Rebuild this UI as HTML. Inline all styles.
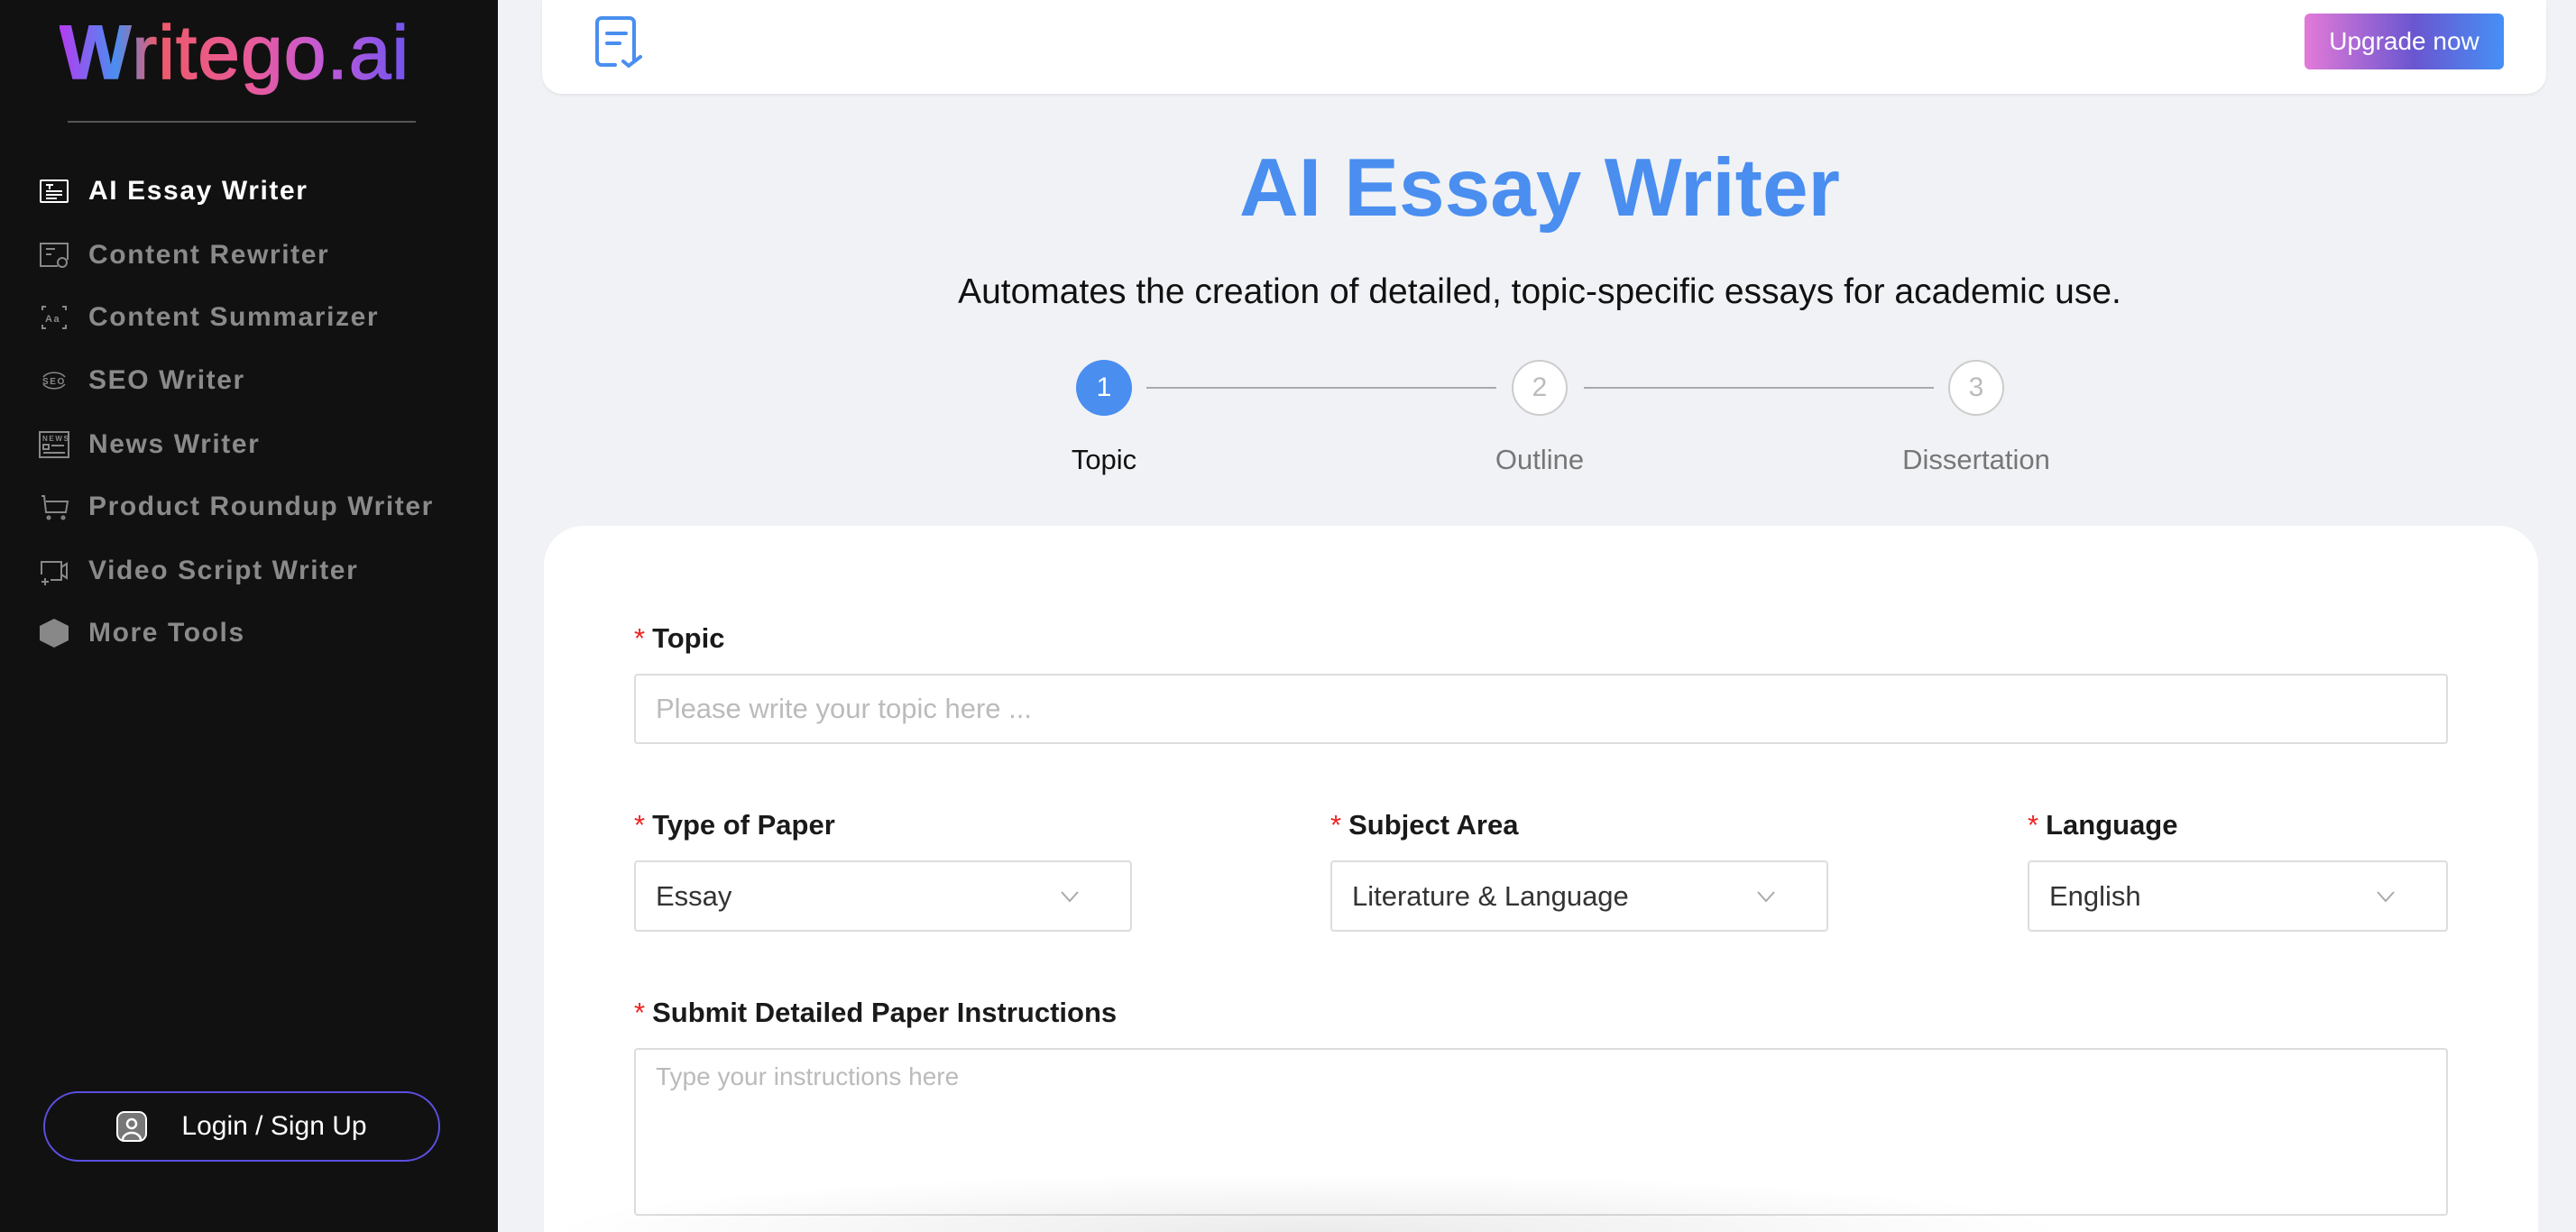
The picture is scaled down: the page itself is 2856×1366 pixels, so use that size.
<!DOCTYPE html>
<html><head><meta charset="utf-8"><style>
*{box-sizing:border-box;margin:0;padding:0}
html,body{width:2856px;height:1366px;overflow:hidden}
body{background:#f0f2f5;font-family:"Liberation Sans",sans-serif;position:relative}
.side{position:absolute;left:0;top:0;width:552px;height:1366px;background:#111}
.logo{position:absolute;left:66px;top:10px;font-size:84px;font-weight:normal;letter-spacing:1px;-webkit-text-stroke:1.5px transparent;background:linear-gradient(90deg,#b53cf0 0%,#4a8ef0 16%,#ee5a6a 28%,#e85a9a 55%,#c45ad6 75%,#7054ee 100%);-webkit-background-clip:text;background-clip:text;color:transparent}
.logo b{font-weight:bold}
.div{position:absolute;left:75px;top:134px;width:386px;height:2px;background:#555}
.item{position:absolute;left:42px;height:40px;display:flex;align-items:center;color:#8a8a8a;font-size:30px;font-weight:bold;letter-spacing:1.6px}
.item svg{width:36px;height:36px;margin-right:20px}
.item.act{color:#fff}
.login{position:absolute;left:48px;top:1210px;width:440px;height:78px;border:2px solid #5b4fe0;border-radius:40px;display:flex;align-items:center;justify-content:center;color:#fff;font-size:30px}
.login svg{margin-right:38px}
.hdr{position:absolute;left:601px;top:0;width:2222px;height:104px;background:#fff;border-radius:0 0 22px 22px;box-shadow:0 2px 3px rgba(0,0,0,.06)}
.up{position:absolute;top:15px;width:221px;height:62px;border-radius:6px;background:linear-gradient(90deg,#e37ad8,#6a56d0 55%,#4590f5);color:#fff;font-size:28px;display:flex;align-items:center;justify-content:center}
.title{position:absolute;left:1000px;width:1414px;top:157px;text-align:center;font-size:91px;font-weight:bold;color:#4a8ef0}
.sub{position:absolute;left:900px;width:1614px;top:302px;text-align:center;font-size:39px;color:#111}
.circ{position:absolute;top:399px;width:62px;height:62px;border-radius:50%;display:flex;align-items:center;justify-content:center;font-size:30px}
.line{position:absolute;top:429px;height:2px;background:#aaa}
.lbl{position:absolute;top:492px;width:300px;text-align:center;font-size:31px;color:#777}
.card{position:absolute;left:603px;top:583px;width:2211px;height:783px;background:#fff;border-radius:44px 44px 0 0}
.fl{position:absolute;font-size:31px;font-weight:bold;color:#1a1a1a}
.fl b{color:#e22;font-weight:normal;margin-right:8px}
.inp{position:absolute;border:2px solid #ddd;border-radius:4px;background:#fff;font-size:31px;color:#bbb;padding-left:22px;display:flex;align-items:center}
.sel{color:#333}
.chev{position:absolute;top:0;bottom:0;display:flex;align-items:center}
</style></head><body>
<div class="side">
<div class="logo"><b>W</b>ritego.ai</div>
<div class="div"></div>
<div class="item act" style="top:192px"><svg viewBox="0 0 36 36" fill="none" stroke="#fff" stroke-width="2"><rect x="3" y="6" width="30" height="24" rx="1"/><path d="M9 11h8M13 11v5M9 18h18M9 22h18M9 26h12"/></svg>AI Essay Writer</div>
<div class="item" style="top:263px"><svg viewBox="0 0 36 36" fill="none" stroke="#888" stroke-width="2"><path d="M22 30H3V5h30v18"/><path d="M9 11h10M9 17h6"/><circle cx="27" cy="26" r="5"/></svg>Content Rewriter</div>
<div class="item" style="top:332px"><svg viewBox="0 0 36 36" fill="none" stroke="#888" stroke-width="2"><path d="M5 10V6h4M27 6h4v4M31 26v4h-4M9 30H5v-4"/><text x="8" y="23" font-size="11" fill="#888" stroke="none">Aa</text></svg>Content Summarizer</div>
<div class="item" style="top:402px"><svg viewBox="0 0 36 36" fill="none" stroke="#888" stroke-width="1.5"><path d="M6 14a14 10 0 0 1 24 0M6 22a14 10 0 0 0 24 0"/><text x="5" y="22" font-size="10" fill="#888" stroke="none">SEO</text></svg>SEO Writer</div>
<div class="item" style="top:473px"><svg viewBox="0 0 36 36" fill="none" stroke="#888" stroke-width="2"><rect x="2" y="4" width="32" height="28"/><path d="M6 18h6v5H6zM15 19h14M6 27h24"/><text x="5" y="14" font-size="8" fill="#888" stroke="none">NEWS</text></svg>News Writer</div>
<div class="item" style="top:542px"><svg viewBox="0 0 36 36" fill="none" stroke="#888" stroke-width="2"><path d="M4 6h3l2 18h22l2-12H9"/><circle cx="12" cy="30" r="1.5"/><circle cx="28" cy="30" r="1.5"/></svg>Product Roundup Writer</div>
<div class="item" style="top:613px"><svg viewBox="0 0 36 36" fill="none" stroke="#888" stroke-width="2"><path d="M4 22V8h22v20H14"/><path d="M26 14l6-4v16l-6-4M4 30h8M8 26v8"/></svg>Video Script Writer</div>
<div class="item" style="top:682px"><svg viewBox="0 0 36 36"><path d="M18 2l16 8v16l-16 8-16-8V10z" fill="#888"/></svg>More Tools</div>
<div class="login"><svg width="34" height="34" viewBox="0 0 34 34"><rect x="1" y="1" width="32" height="32" rx="8" fill="#777" stroke="#fff" stroke-width="2"/><circle cx="17" cy="14" r="5" fill="none" stroke="#fff" stroke-width="2.5"/><path d="M7 32a10 8 0 0 1 20 0" fill="none" stroke="#fff" stroke-width="2.5"/></svg>Login / Sign Up</div>
</div>
<div class="hdr"><svg style="position:absolute;left:56px;top:16px" width="56" height="60" viewBox="0 0 56 60" fill="none" stroke="#4a8ef0" stroke-width="4" stroke-linecap="round"><path d="M25 56H10a5 5 0 0 1-5-5V9a5 5 0 0 1 5-5h31a5 5 0 0 1 5 5v42"/><path d="M16 21h21M16 32h14M34 52l6 5 13-10"/></svg>
<div class="up" style="left:1954px">Upgrade now</div></div>
<div class="title">AI Essay Writer</div>
<div class="sub">Automates the creation of detailed, topic-specific essays for academic use.</div>
<div class="circ" style="left:1193px;background:#4a8ef0;color:#fff">1</div>
<div class="line" style="left:1271px;width:388px"></div>
<div class="circ" style="left:1676px;background:#fff;border:2px solid #ccc;color:#bbb">2</div>
<div class="line" style="left:1756px;width:388px"></div>
<div class="circ" style="left:2160px;background:#fff;border:2px solid #ccc;color:#bbb">3</div>
<div class="lbl" style="left:1074px;color:#111">Topic</div>
<div class="lbl" style="left:1557px">Outline</div>
<div class="lbl" style="left:2041px">Dissertation</div>
<div class="card"></div>
<div class="fl" style="left:703px;top:690px"><b>*</b>Topic</div>
<div class="inp" style="left:703px;top:747px;width:2011px;height:78px">Please write your topic here ...</div>
<div class="fl" style="left:703px;top:897px"><b>*</b>Type of Paper</div>
<div class="fl" style="left:1475px;top:897px"><b>*</b>Subject Area</div>
<div class="fl" style="left:2248px;top:897px"><b>*</b>Language</div>
<div class="inp sel" style="left:703px;top:954px;width:552px;height:79px">Essay<span class="chev" style="left:470px"><svg width="22" height="14" viewBox="0 0 22 14" fill="none" stroke="#aaa" stroke-width="2"><path d="M2 2l9 10 9-10"/></svg></span></div>
<div class="inp sel" style="left:1475px;top:954px;width:552px;height:79px">Literature &amp; Language<span class="chev" style="left:470px"><svg width="22" height="14" viewBox="0 0 22 14" fill="none" stroke="#aaa" stroke-width="2"><path d="M2 2l9 10 9-10"/></svg></span></div>
<div class="inp sel" style="left:2248px;top:954px;width:466px;height:79px">English<span class="chev" style="left:384px"><svg width="22" height="14" viewBox="0 0 22 14" fill="none" stroke="#aaa" stroke-width="2"><path d="M2 2l9 10 9-10"/></svg></span></div>
<div class="fl" style="left:703px;top:1105px"><b>*</b>Submit Detailed Paper Instructions</div>
<div class="inp" style="left:703px;top:1162px;width:2011px;height:186px;align-items:flex-start;padding-top:14px;font-size:28px">Type your instructions here</div>
<div style="position:absolute;left:600px;top:1300px;width:1700px;height:66px;background:radial-gradient(ellipse at 50% 100%,rgba(0,0,0,.08),rgba(0,0,0,0) 70%)"></div>
</body></html>
